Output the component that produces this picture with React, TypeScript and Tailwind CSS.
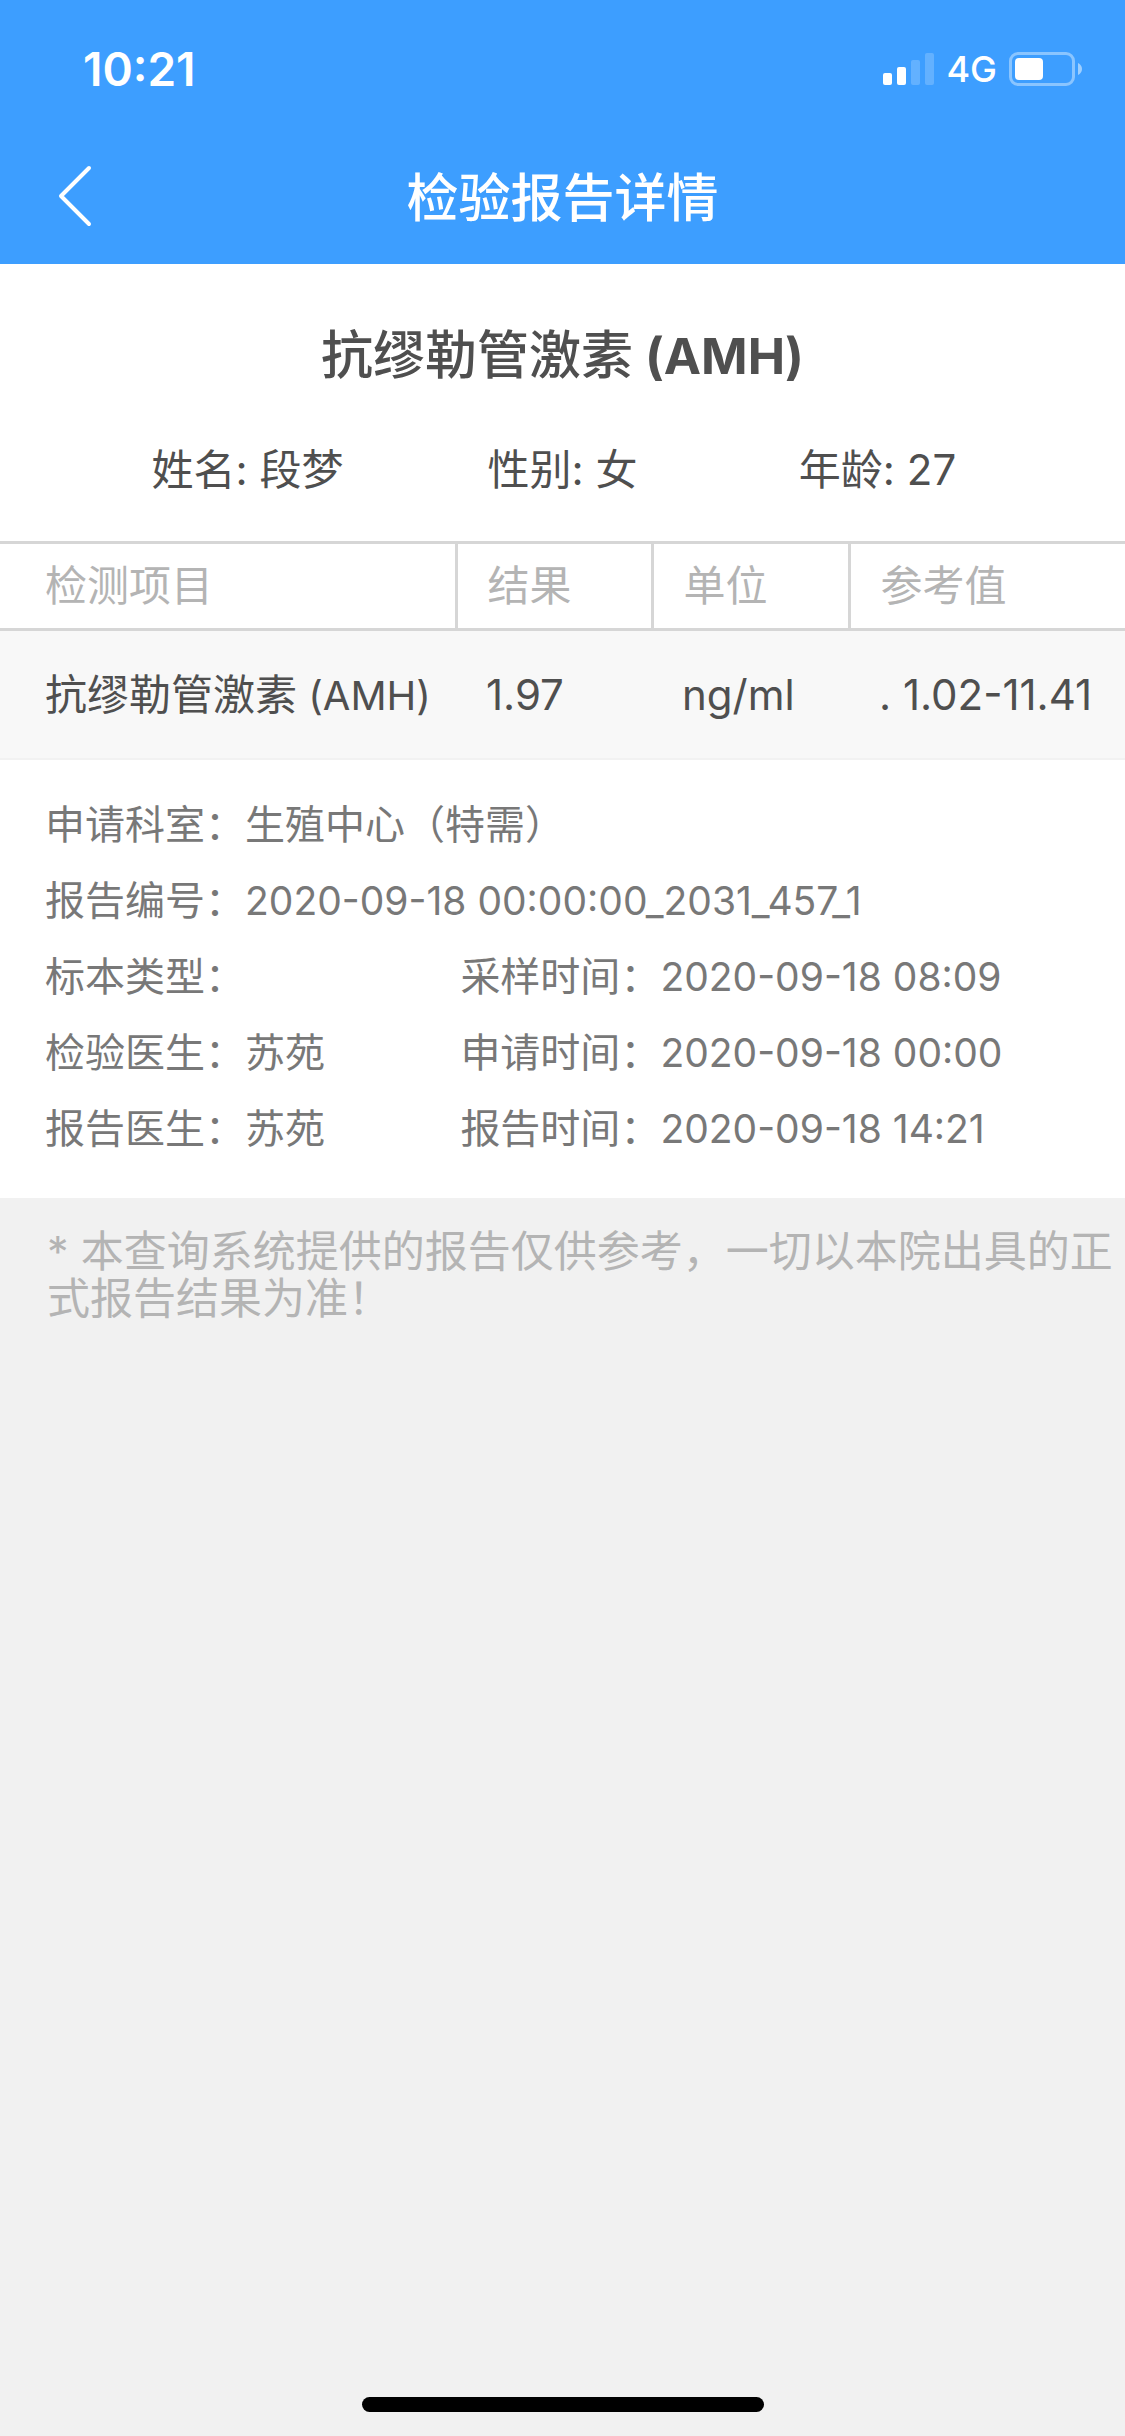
type Field = { label: string; value: string; numeric?: boolean };

const patient: Field[] = [
  { label: "姓名", value: "段梦" },
  { label: "性别", value: "女" },
  { label: "年龄", value: "27" },
];

const columns = [
  { name: "检测项目", cell: "w-[456px] border-r-[3px] pl-[45px]" },
  { name: "结果", cell: "w-[196px] border-r-[3px] pl-[30px]" },
  { name: "单位", cell: "w-[197px] border-r-[3px] pl-[30px]" },
  { name: "参考值", cell: "pl-[30px]" },
];

const test = { name: "抗缪勒管激素", code: "(AMH)" };

const results = [{ test, values: ["1.97", "ng/ml", ". 1.02-11.41"] }];

const wideFields: Field[] = [
  { label: "申请科室", value: "生殖中心（特需）" },
  { label: "报告编号", value: "2020-09-18 00:00:00_2031_457_1", numeric: true },
];

const pairedFields: Field[] = [
  { label: "标本类型", value: "" },
  { label: "采样时间", value: "2020-09-18 08:09", numeric: true },
  { label: "检验医生", value: "苏苑" },
  { label: "申请时间", value: "2020-09-18 00:00", numeric: true },
  { label: "报告医生", value: "苏苑" },
  { label: "报告时间", value: "2020-09-18 14:21", numeric: true },
];

function SignalIcon() {
  return (
    <svg width="51" height="32" viewBox="0 0 51 32" fill="#fff" aria-hidden="true">
      <rect x="0" y="20" width="9" height="12" rx="2" />
      <rect x="14" y="14" width="9" height="18" rx="2" />
      <rect x="28" y="7" width="9" height="25" rx="2" opacity="0.2" />
      <rect x="42" y="0" width="9" height="32" rx="2" opacity="0.2" />
    </svg>
  );
}

function BatteryIcon() {
  return (
    <svg width="73" height="34" viewBox="0 0 73 34" aria-hidden="true">
      <rect x="1.5" y="1.5" width="63" height="31" rx="7.5" fill="none" stroke="#fff" strokeWidth="3" opacity="0.4" />
      <rect x="6" y="6" width="28" height="22" rx="4" fill="#fff" />
      <path d="M69 11c2.400 1 4 3.400 4 6s-1.600 5-4 6z" fill="#fff" opacity="0.5" />
    </svg>
  );
}

function Detail({ label, value, numeric }: Field) {
  return (
    <div className="flex">
      <dt className="whitespace-nowrap">{label}：</dt>
      <dd className={numeric ? "text-[39px] leading-[76px] whitespace-nowrap" : "whitespace-nowrap"}>{value}</dd>
    </div>
  );
}

export default function App() {
  return (
    <div className="flex min-h-screen flex-col bg-[#f1f1f1] font-['Inter','Noto_Sans_CJK_SC',sans-serif] text-[42px] text-[#4f4f4f]" lang="zh-CN">
      <header className="bg-[#3d9eff] text-white">
        <div className="flex h-[132px] items-center justify-between pt-[6px] pr-[43px] pl-[83px]">
          <span className="text-[46px] font-semibold">10:21</span>
          <div className="flex items-center gap-[12px]">
            <SignalIcon />
            <span className="text-[36px] font-medium">4G</span>
            <BatteryIcon />
          </div>
        </div>
        <nav className="grid h-[132px] grid-cols-[1fr_auto_1fr] items-center px-[57px]">
          <button type="button" aria-label="返回" className="justify-self-start pb-[4px]">
            <svg width="35" height="62" viewBox="0 0 35 62" fill="none" stroke="#fff" strokeWidth="4" strokeLinecap="round" strokeLinejoin="round" aria-hidden="true">
              <path d="M32 3L4 31l28 28" />
            </svg>
          </button>
          <h1 className="pt-[2px] text-[52px] font-medium">检验报告详情</h1>
        </nav>
      </header>

      <main>
        <section className="bg-white">
          <h2 className="pt-[52px] text-center text-[52px] leading-[80px] font-medium">
            {test.name}
            <span className="text-[50px] font-bold"> {test.code}</span>
          </h2>
          <dl className="grid grid-cols-3 px-[90px] pt-[44px] pb-[41px] leading-[60px]">
            {patient.map((f) => (
              <div key={f.label} className="flex justify-center gap-[12px]">
                <dt>{f.label}:</dt>
                <dd>{f.value}</dd>
              </div>
            ))}
          </dl>

          <table className="w-full table-fixed text-left">
            <thead>
              <tr className="h-[87px] border-y-[3px] border-[#d6d6d6] leading-[60px] text-[#b4b4b4]">
                {columns.map((c) => (
                  <th key={c.name} scope="col" className={`${c.cell} border-[#d6d6d6] font-normal`}>
                    {c.name}
                  </th>
                ))}
              </tr>
            </thead>
            <tbody>
              {results.map((row) => (
                <tr key={row.test.code} className="h-[129px] border-b-2 border-[#f2f2f2] bg-[#f8f8f8] whitespace-nowrap">
                  <td className="pl-[45px]">
                    {row.test.name}
                    <span className="text-[40px]"> {row.test.code}</span>
                  </td>
                  {row.values.map((value) => (
                    <td key={value} className="pl-[30px]">
                      {value}
                    </td>
                  ))}
                </tr>
              ))}
            </tbody>
          </table>

          <dl className="pt-[27px] pb-[31px] pl-[45px] text-[40px] leading-[76px] text-[#787878]">
            {wideFields.map((f) => (
              <Detail key={f.label} {...f} />
            ))}
            <div className="grid grid-cols-[5fr_8fr]">
              {pairedFields.map((f) => (
                <Detail key={f.label} {...f} />
              ))}
            </div>
          </dl>
        </section>

        <p className="pt-[30px] pl-[47px] text-[43px] leading-[47px] text-[#b4b4b4]">* 本查询系统提供的报告仅供参考，一切以本院出具的正式报告结果为准！</p>
      </main>

      <footer className="mt-auto flex justify-center pb-[24px]">
        <div className="h-[15px] w-[402px] rounded-full bg-black" />
      </footer>
    </div>
  );
}
